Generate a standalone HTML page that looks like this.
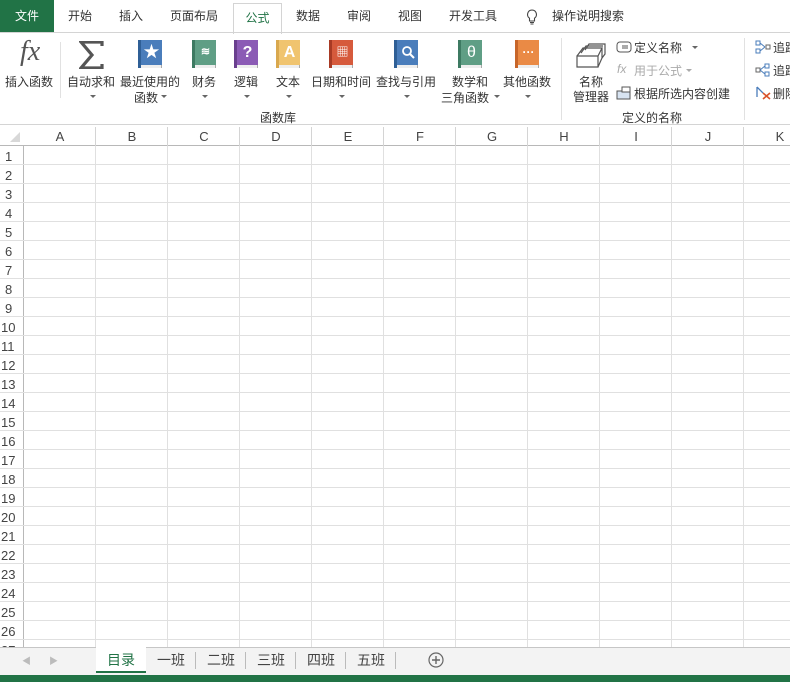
<!DOCTYPE html>
<html><head><meta charset="utf-8"><style>
*{margin:0;padding:0;box-sizing:border-box}
body{width:790px;height:682px;overflow:hidden;background:#fff;font-family:"Liberation Sans","Noto Sans CJK SC",sans-serif;font-size:12px;color:#262626;position:relative}
.a{position:absolute;white-space:nowrap}
.tab{top:0;height:32px;line-height:32px;font-size:12px;color:#333}
.lbl{font-size:12px;color:#333;text-align:center}
.arr{width:0;height:0;border-left:3px solid transparent;border-right:3px solid transparent;border-top:3px solid #666}
.book{width:24px;height:28px;top:40px}
.book .s{position:absolute;left:0;top:0;width:3px;height:28px}
.book .f{position:absolute;left:3px;top:0;width:21px;height:25px;color:#fff;font-weight:bold;text-align:center;line-height:25px;font-size:16px}
.book .p{position:absolute;left:3px;top:25px;width:21px;height:3px;background:#eee;border-right:1px solid #aaa}
.ch{top:128px;height:18px;line-height:18px;text-align:center;font-size:13px;color:#444;width:72px}
.rn{left:0;width:22px;height:19px;line-height:19px;font-size:13px;color:#444}
.sh{top:650px;font-size:14px;color:#444}
</style></head><body>
<div class="a" style="left:0;top:0;width:54px;height:32px;background:#217346;color:#fff;line-height:32px;text-align:center">文件</div>
<div class="a tab" style="left:68px">开始</div>
<div class="a tab" style="left:119px">插入</div>
<div class="a tab" style="left:170px">页面布局</div>
<div class="a" style="left:233px;top:3px;width:49px;height:31px;border:1px solid #d4d4d4;border-bottom:none;background:#fff;color:#217346;text-align:center;line-height:28px">公式</div>
<div class="a tab" style="left:296px">数据</div>
<div class="a tab" style="left:347px">审阅</div>
<div class="a tab" style="left:398px">视图</div>
<div class="a tab" style="left:449px">开发工具</div>
<svg class="a" style="left:526px;top:9px" width="12" height="16" viewBox="0 0 12 16"><path d="M6 1a4.5 4.5 0 0 0-2.5 8.2V12h5V9.2A4.5 4.5 0 0 0 6 1zM4 13.5h4M4.5 15h3" fill="none" stroke="#444" stroke-width="1.1"/></svg>
<div class="a tab" style="left:552px">操作说明搜索</div>
<div class="a" style="left:0;top:32px;width:790px;height:1px;background:#d4d4d4"></div>
<div class="a" style="left:20px;top:36px;font-family:'Liberation Serif',serif;font-style:italic;font-size:28px;color:#555">fx</div>
<div class="a lbl" style="left:5px;top:73px">插入函数</div>
<div class="a" style="left:60px;top:42px;width:1px;height:56px;background:#e1e1e1"></div>
<svg class="a" style="left:79px;top:41px" width="25" height="28" viewBox="0 0 25 28"><path d="M23 5V1H2l11 13L2 27h21v-4" fill="none" stroke="#555" stroke-width="3.2" stroke-linejoin="miter"/></svg>
<div class="a lbl" style="left:67px;top:73px">自动求和</div>
<div class="a arr" style="left:90px;top:95px"></div>
<div class="a book" style="left:138px"><div class="s" style="background:#2f5f96"></div><div class="f" style="background:#4a7dbb">★</div><div class="p"></div></div>
<div class="a lbl" style="left:120px;top:73px">最近使用的</div>
<div class="a lbl" style="left:134px;top:89px">函数</div><div class="a arr" style="left:161px;top:95px"></div>
<div class="a book" style="left:192px"><div class="s" style="background:#3d7a62"></div><div class="f" style="background:#5f9e85;font-size:11px">≋</div><div class="p"></div></div>
<div class="a lbl" style="left:192px;top:73px">财务</div><div class="a arr" style="left:202px;top:95px"></div>
<div class="a book" style="left:234px"><div class="s" style="background:#6a3f8e"></div><div class="f" style="background:#8b5bb5">?</div><div class="p"></div></div>
<div class="a lbl" style="left:234px;top:73px">逻辑</div><div class="a arr" style="left:244px;top:95px"></div>
<div class="a book" style="left:276px"><div class="s" style="background:#d9a84e"></div><div class="f" style="background:#f0c46f">A</div><div class="p"></div></div>
<div class="a lbl" style="left:276px;top:73px">文本</div><div class="a arr" style="left:286px;top:95px"></div>
<div class="a book" style="left:329px"><div class="s" style="background:#a83a24"></div><div class="f" style="background:#d65a3c;font-size:12px">▦</div><div class="p"></div></div>
<div class="a lbl" style="left:311px;top:73px">日期和时间</div><div class="a arr" style="left:339px;top:95px"></div>
<div class="a book" style="left:394px"><div class="s" style="background:#2f5f96"></div><div class="f" style="background:#4a7dbb"><svg width="14" height="14" style="margin-top:5px"><circle cx="6" cy="6" r="4" fill="none" stroke="#fff" stroke-width="1.8"/><path d="M9 9l4 4" stroke="#fff" stroke-width="2"/></svg></div><div class="p"></div></div>
<div class="a lbl" style="left:376px;top:73px">查找与引用</div><div class="a arr" style="left:404px;top:95px"></div>
<div class="a book" style="left:458px"><div class="s" style="background:#3d7a62"></div><div class="f" style="background:#5f9e85;font-weight:normal">θ</div><div class="p"></div></div>
<div class="a lbl" style="left:452px;top:73px">数学和</div>
<div class="a lbl" style="left:441px;top:89px">三角函数</div><div class="a arr" style="left:494px;top:95px"></div>
<div class="a book" style="left:515px"><div class="s" style="background:#c7662a"></div><div class="f" style="background:#ea8a45;font-size:12px">···</div><div class="p"></div></div>
<div class="a lbl" style="left:503px;top:73px">其他函数</div><div class="a arr" style="left:525px;top:95px"></div>
<div class="a lbl" style="left:260px;top:109px">函数库</div>
<div class="a" style="left:561px;top:38px;width:1px;height:82px;background:#e1e1e1"></div>
<svg class="a" style="left:575px;top:42px" width="32" height="28" viewBox="0 0 32 28"><path d="M2 14h21v11H2zM2 14l6-8h19l-4 8M6 11l5-7h17M27 6v10l-4 9M10 8l4-6h16v10l-3 4" fill="#fff" stroke="#555" stroke-width="1.2"/></svg>
<div class="a lbl" style="left:579px;top:73px">名称</div>
<div class="a lbl" style="left:573px;top:88px">管理器</div>
<svg class="a" style="left:616px;top:41px" width="16" height="12"><rect x="1" y="1" width="14" height="10" rx="3" fill="none" stroke="#555"/><path d="M6 5h6M6 7h6" stroke="#555"/></svg>
<div class="a lbl" style="left:634px;top:39px">定义名称</div><div class="a arr" style="left:692px;top:46px"></div>
<div class="a" style="left:617px;top:62px;color:#aaa;font-style:italic;font-size:12px">fx</div>
<div class="a lbl" style="left:634px;top:62px;color:#aaa">用于公式</div><div class="a arr" style="left:686px;top:69px;border-top-color:#aaa"></div>
<svg class="a" style="left:616px;top:86px" width="15" height="14"><rect x="1" y="5" width="13" height="8" fill="#d8e4f2" stroke="#555"/><rect x="6" y="1" width="8" height="5" fill="#fff" stroke="#555"/></svg>
<div class="a lbl" style="left:634px;top:85px">根据所选内容创建</div>
<div class="a lbl" style="left:622px;top:109px">定义的名称</div>
<div class="a" style="left:744px;top:38px;width:1px;height:82px;background:#e1e1e1"></div>
<svg class="a" style="left:755px;top:40px" width="17" height="14"><rect x="1" y="1" width="4" height="4" fill="none" stroke="#4a7dbb"/><rect x="1" y="9" width="4" height="4" fill="none" stroke="#4a7dbb"/><path d="M5 3l5 4M5 11l5-4" stroke="#4a7dbb"/><rect x="11" y="5" width="4" height="4" fill="none" stroke="#666"/></svg>
<div class="a lbl" style="left:773px;top:39px">追踪</div>
<svg class="a" style="left:755px;top:63px" width="17" height="14"><rect x="1" y="5" width="4" height="4" fill="none" stroke="#666"/><path d="M5 7l5-4M5 7l5 4" stroke="#4a7dbb"/><rect x="10" y="1" width="4" height="4" fill="none" stroke="#4a7dbb"/><rect x="10" y="9" width="4" height="4" fill="none" stroke="#4a7dbb"/></svg>
<div class="a lbl" style="left:773px;top:62px">追踪</div>
<svg class="a" style="left:755px;top:85px" width="17" height="15"><path d="M2 2l6 6M2 2v10" stroke="#4a7dbb" stroke-width="1.3" fill="none"/><path d="M8 8l7 6M15 8l-7 6" stroke="#d9532b" stroke-width="1.6"/></svg>
<div class="a lbl" style="left:773px;top:85px">删除</div>
<div class="a" style="left:0;top:124px;width:790px;height:1px;background:#d4d4d4"></div>
<div class="a" style="left:0;top:127px;width:790px;height:19px;background:#fff;border-bottom:1px solid #b8b8b8"></div>
<div class="a" style="left:0;top:146px;width:24px;height:501px;border-right:1px solid #b8b8b8"></div>
<div class="a" style="left:24px;top:127px;width:766px;height:19px;background:repeating-linear-gradient(90deg,transparent 0 71px,#d4d4d4 71px 72px)"></div>
<div class="a" style="left:24px;top:146px;width:766px;height:501px;background:repeating-linear-gradient(90deg,transparent 0 71px,#e0e0e0 71px 72px),repeating-linear-gradient(180deg,transparent 0 18px,#e0e0e0 18px 19px)"></div>
<div class="a" style="left:0;top:146px;width:24px;height:501px;background:repeating-linear-gradient(180deg,transparent 0 18px,#e0e0e0 18px 19px)"></div>
<svg class="a" style="left:10px;top:132px" width="10" height="10"><path d="M10 0V10H0z" fill="#d8d8d8"/></svg>
<div class="a ch" style="left:24px">A</div><div class="a ch" style="left:96px">B</div><div class="a ch" style="left:168px">C</div><div class="a ch" style="left:240px">D</div><div class="a ch" style="left:312px">E</div><div class="a ch" style="left:384px">F</div><div class="a ch" style="left:456px">G</div><div class="a ch" style="left:528px">H</div><div class="a ch" style="left:600px">I</div><div class="a ch" style="left:672px">J</div><div class="a ch" style="left:744px">K</div>
<div class="a rn" style="top:147px;left:5px">1</div><div class="a rn" style="top:166px;left:5px">2</div><div class="a rn" style="top:185px;left:5px">3</div><div class="a rn" style="top:204px;left:5px">4</div><div class="a rn" style="top:223px;left:5px">5</div><div class="a rn" style="top:242px;left:5px">6</div><div class="a rn" style="top:261px;left:5px">7</div><div class="a rn" style="top:280px;left:5px">8</div><div class="a rn" style="top:299px;left:5px">9</div>
<div class="a rn" style="top:318px;left:1px">10</div><div class="a rn" style="top:337px;left:1px">11</div><div class="a rn" style="top:356px;left:1px">12</div><div class="a rn" style="top:375px;left:1px">13</div><div class="a rn" style="top:394px;left:1px">14</div><div class="a rn" style="top:413px;left:1px">15</div><div class="a rn" style="top:432px;left:1px">16</div><div class="a rn" style="top:451px;left:1px">17</div><div class="a rn" style="top:470px;left:1px">18</div><div class="a rn" style="top:489px;left:1px">19</div><div class="a rn" style="top:508px;left:1px">20</div><div class="a rn" style="top:527px;left:1px">21</div><div class="a rn" style="top:546px;left:1px">22</div><div class="a rn" style="top:565px;left:1px">23</div><div class="a rn" style="top:584px;left:1px">24</div><div class="a rn" style="top:603px;left:1px">25</div><div class="a rn" style="top:622px;left:1px">26</div><div class="a rn" style="top:641px;left:1px">27</div>
<div class="a" style="left:0;top:647px;width:790px;height:28px;background:#f3f3f3;border-top:1px solid #c6c6c6"></div>
<div class="a" style="left:22px;top:654px;color:#bbb;font-size:9px">◀</div>
<div class="a" style="left:49px;top:654px;color:#bbb;font-size:9px">▶</div>
<div class="a" style="left:96px;top:646px;width:50px;height:27px;background:#fff;border-bottom:2px solid #217346"></div>
<div class="a sh" style="left:107px;color:#217346">目录</div>
<div class="a sh" style="left:157px">一班</div>
<div class="a" style="left:195px;top:652px;width:1px;height:17px;background:#bbb"></div>
<div class="a sh" style="left:207px">二班</div>
<div class="a" style="left:245px;top:652px;width:1px;height:17px;background:#bbb"></div>
<div class="a sh" style="left:257px">三班</div>
<div class="a" style="left:295px;top:652px;width:1px;height:17px;background:#bbb"></div>
<div class="a sh" style="left:307px">四班</div>
<div class="a" style="left:345px;top:652px;width:1px;height:17px;background:#bbb"></div>
<div class="a sh" style="left:357px">五班</div>
<div class="a" style="left:395px;top:652px;width:1px;height:17px;background:#bbb"></div>
<svg class="a" style="left:428px;top:652px" width="16" height="16"><circle cx="8" cy="8" r="7" fill="none" stroke="#666" stroke-width="1.2"/><path d="M8 4v8M4 8h8" stroke="#666" stroke-width="1.4"/></svg>
<div class="a" style="left:0;top:675px;width:790px;height:7px;background:#217346"></div>
</body></html>
